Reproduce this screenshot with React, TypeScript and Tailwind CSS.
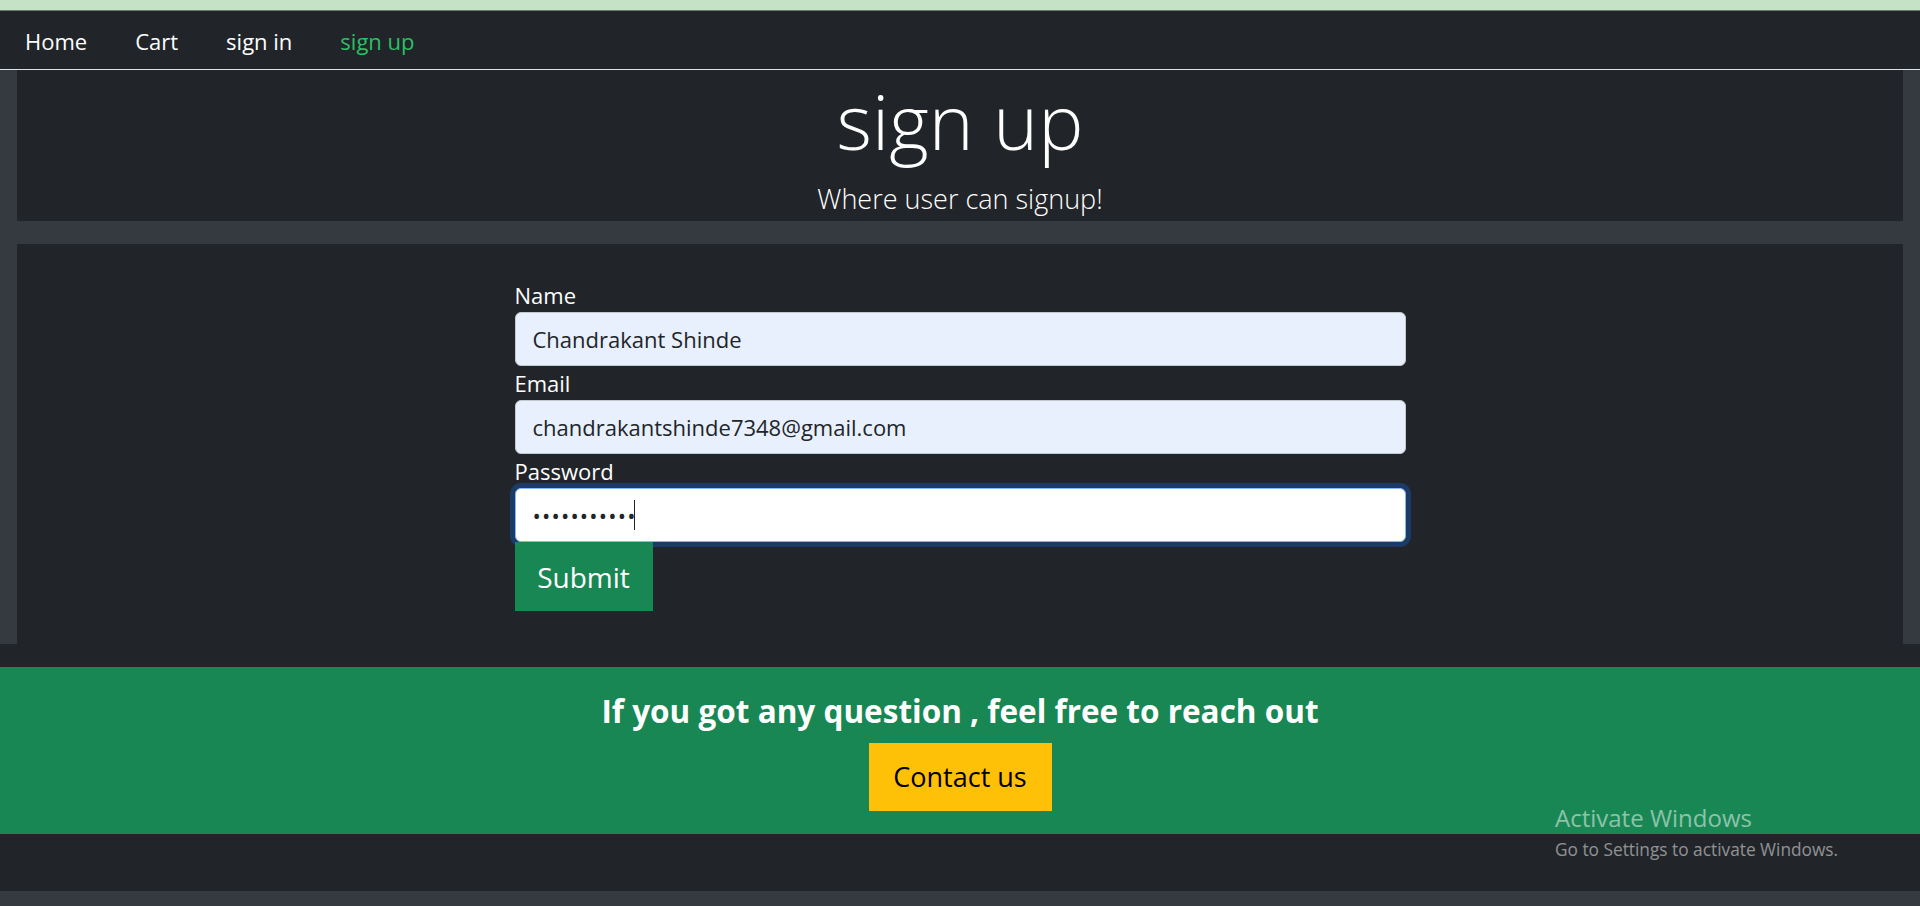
import React from "react";

const font = { fontFamily: '"Open Sans", "Noto Sans", Arial, sans-serif' };

const links = [
  { label: "Home", active: false },
  { label: "Cart", active: false },
  { label: "sign in", active: false },
  { label: "sign up", active: true },
];

function Field({
  label,
  value,
  type = "text",
}: {
  label: string;
  value: string;
  type?: string;
}) {
  return (
    <div>
      <label className="block text-[22px] leading-[34px] text-white">{label}</label>
      <input
        type={type}
        readOnly
        value={value}
        className="block w-full h-[54px] rounded-[6px] border border-[#c4c9cf] bg-[#e8f0fe] px-[17px] text-[22px] text-[#212529] outline-none"
      />
    </div>
  );
}

export default function App() {
  return (
    <div className="relative min-h-[906px] bg-[#212529] flex flex-col" style={font}>
      {/* browser strip */}
      <div className="h-[11px] bg-[#c5e1c6] border-b border-[#6b7a6c]" />

      {/* navbar */}
      <nav className="h-[59px] border-b border-[#dee2e6] flex items-center pl-[25px] pt-[3px] gap-[48px]">
        {links.map((l) => (
          <a
            key={l.label}
            href="#"
            className={`text-[22px] leading-[33px] ${l.active ? "text-[#2dbf63]" : "text-white"}`}
          >
            {l.label}
          </a>
        ))}
      </nav>

      {/* main */}
      <div className="bg-[#343a40] px-[17px]">
        <header className="h-[151px] bg-[#212529] flex flex-col items-center text-white">
          <h1 className="mt-[11px] text-[76px] leading-[80px] font-light">sign up</h1>
          <p className="mt-[21px] text-[27px] leading-[34px] font-light">Where user can signup!</p>
        </header>

        <section className="mt-[23px] h-[400px] bg-[#212529] pt-[34px]">
          <form className="w-[891px] mx-auto" onSubmit={(e) => e.preventDefault()}>
            <Field label="Name" value="Chandrakant Shinde" />
            <Field label="Email" value="chandrakantshinde7348@gmail.com" />
            <div>
              <label className="block text-[22px] leading-[34px] text-white">Password</label>
              <div className="relative">
                <input
                  type="password"
                  readOnly
                  value="chandrakant"
                  className="block w-full h-[54px] rounded-[6px] border border-[#86b7fe] bg-white px-[17px] text-[22px] tracking-[1.2px] text-[#212529] outline-none shadow-[0_0_0_5px_#1c3a66]"
                />
                <span className="absolute left-[119px] top-[12px] h-[30px] w-px bg-[#212529]" />
              </div>
            </div>
            <button
              type="submit"
              className="relative block w-[138px] h-[69px] bg-[#198754] text-white text-[28px]"
            >
              Submit
            </button>
          </form>
        </section>
      </div>

      {/* contact band */}
      <div className="mt-[23px] h-[167px] bg-[#198754] flex flex-col items-center pt-[23px]">
        <h3 className="text-[31.5px] leading-[41px] font-bold text-white">
          If you got any question , feel free to reach out
        </h3>
        <button className="mt-[12px] w-[183px] h-[68px] bg-[#ffc107] text-black text-[27px]">
          Contact us
        </button>
      </div>

      <div className="flex-1" />
      <div className="h-[15px] bg-[#343a40]" />

      {/* windows watermark */}
      <div className="absolute left-[1555px] top-[806px] text-white/50 pointer-events-none">
        <div className="text-[24px] leading-none">Activate Windows</div>
        <div className="mt-[11px] text-[17.3px] leading-none">Go to Settings to activate Windows.</div>
      </div>
    </div>
  );
}
